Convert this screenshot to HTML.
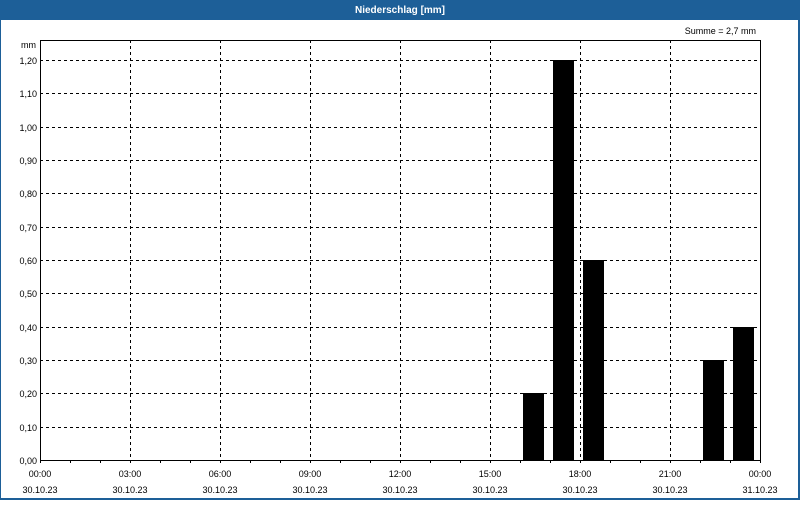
<!DOCTYPE html><html><head><style>body{margin:0;width:800px;height:500px;overflow:hidden;background:#fff}</style></head><body>
<svg width="800" height="500" xmlns="http://www.w3.org/2000/svg" font-family="Liberation Sans, sans-serif" font-size="9">
<rect x="0" y="0" width="800" height="500" fill="#1d5f98"/>
<rect x="1" y="20" width="797" height="478" fill="#fff"/>
<text x="400" y="13" fill="#fff" font-weight="bold" font-size="10" text-anchor="middle">Niederschlag [mm]</text>
<text x="756" y="34" text-anchor="end">Summe = 2,7 mm</text>
<text x="36" y="48" text-anchor="end">mm</text>
<g stroke="#000" stroke-dasharray="3,3" stroke-width="1">
<path d="M40 60.5H760M40 93.5H760M40 127.5H760M40 160.5H760M40 193.5H760M40 227.5H760M40 260.5H760M40 293.5H760M40 327.5H760M40 360.5H760M40 393.5H760M40 427.5H760"/>
<path d="M130.5 40V460M220.5 40V460M310.5 40V460M400.5 40V460M490.5 40V460M580.5 40V460M670.5 40V460"/>
</g>
<g fill="#000">
<rect x="523" y="393" width="21" height="67"/>
<rect x="553" y="60" width="21" height="400"/>
<rect x="583" y="260" width="21" height="200"/>
<rect x="703" y="360" width="21" height="100"/>
<rect x="733" y="327" width="21" height="133"/>
</g>
<rect x="40.5" y="40.5" width="720" height="420" fill="none" stroke="#000"/>
<g stroke="#000"><path d="M70.5 460v3M100.5 460v3M130.5 460v3M160.5 460v3M190.5 460v3M220.5 460v3M250.5 460v3M280.5 460v3M310.5 460v3M340.5 460v3M370.5 460v3M400.5 460v3M430.5 460v3M460.5 460v3M490.5 460v3M520.5 460v3M550.5 460v3M580.5 460v3M610.5 460v3M640.5 460v3M670.5 460v3M700.5 460v3M730.5 460v3M40.5 460v3M760.5 460v3"/></g>
<g text-anchor="end">
<text x="37" y="64">1,20</text><text x="37" y="97">1,10</text><text x="37" y="131">1,00</text><text x="37" y="164">0,90</text><text x="37" y="197">0,80</text><text x="37" y="231">0,70</text><text x="37" y="264">0,60</text><text x="37" y="297">0,50</text><text x="37" y="331">0,40</text><text x="37" y="364">0,30</text><text x="37" y="397">0,20</text><text x="37" y="431">0,10</text><text x="37" y="464">0,00</text>
</g>
<g text-anchor="middle">
<text x="40" y="477">00:00</text><text x="40" y="493">30.10.23</text>
<text x="130" y="477">03:00</text><text x="130" y="493">30.10.23</text>
<text x="220" y="477">06:00</text><text x="220" y="493">30.10.23</text>
<text x="310" y="477">09:00</text><text x="310" y="493">30.10.23</text>
<text x="400" y="477">12:00</text><text x="400" y="493">30.10.23</text>
<text x="490" y="477">15:00</text><text x="490" y="493">30.10.23</text>
<text x="580" y="477">18:00</text><text x="580" y="493">30.10.23</text>
<text x="670" y="477">21:00</text><text x="670" y="493">30.10.23</text>
<text x="760" y="477">00:00</text><text x="760" y="493">31.10.23</text>
</g>
</svg></body></html>
